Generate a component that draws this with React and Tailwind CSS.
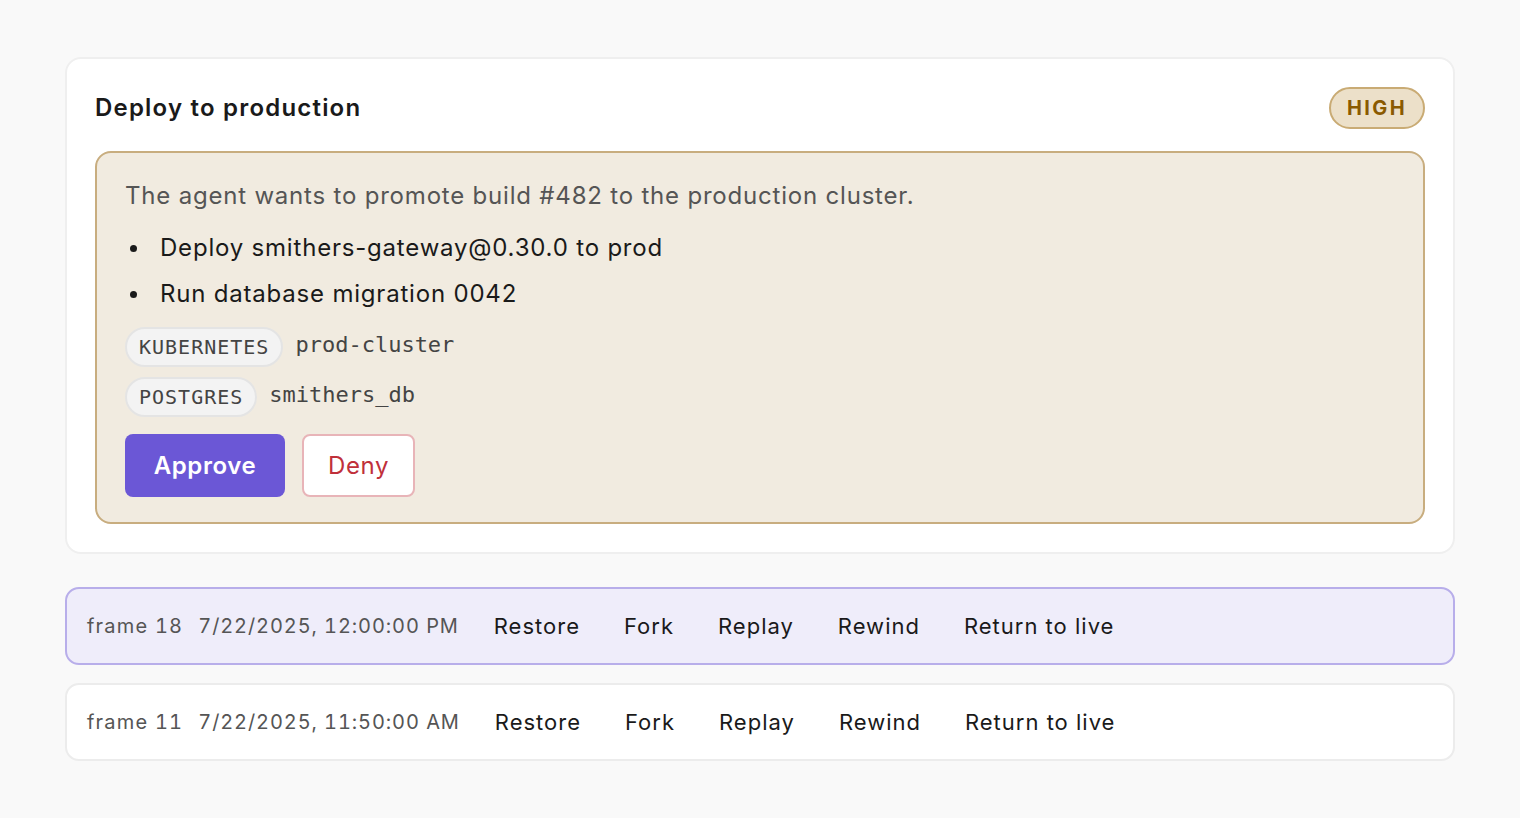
import React from 'react';

const frames = [
    { id: 18, time: '7/22/2025, 12:00:00 PM', active: true },
    { id: 11, time: '7/22/2025, 11:50:00 AM', active: false },
];

const targets = [
    { kind: 'KUBERNETES', name: 'prod-cluster' },
    { kind: 'POSTGRES', name: 'smithers_db' },
];

const steps = ['Deploy smithers-gateway@0.30.0 to prod', 'Run database migration 0042'];

const actions = ['Restore', 'Fork', 'Replay', 'Rewind', 'Return to live'];

const mono = { fontFamily: '"DejaVu Sans Mono", "Liberation Mono", monospace' };

const App = () => {
    return (
        <div className="min-h-screen bg-[#f9f9f9] px-[65px] pt-[57px] font-['Inter',sans-serif]">
            {/* Approval card */}
            <div className="bg-white border-2 border-[#efefef] rounded-[16px] px-[28px] pt-[25px] pb-[28px]">
                <div className="flex items-center justify-between">
                    <h1 className="text-[24px] font-semibold text-[#1a1a1a] leading-[48px] tracking-[1.2px]">
                        Deploy to production
                    </h1>
                    <span className="px-[16px] h-[42px] flex items-center rounded-full bg-[#ece0c9] border-2 border-[#c9ab74] text-[#8a5a00] text-[20px] font-bold tracking-[0.12em]">
                        HIGH
                    </span>
                </div>

                <div className="mt-[19px] bg-[#f1ebe0] border-2 border-[#c8ad7f] rounded-[16px] px-[28px] pt-[25px] pb-[25px]">
                    <p className="text-[24px] text-[#555555] leading-[36px] tracking-[0.8px]">
                        The agent wants to promote build #482 to the production cluster.
                    </p>
                    <ul className="mt-[16px] flex flex-col gap-[10px] text-[24px] text-[#1a1a1a] tracking-[0.8px]">
                        {steps.map((s) => (
                            <li key={s} className="flex items-center leading-[36px]">
                                <span className="ml-[5px] w-[7px] h-[7px] rounded-full bg-[#1a1a1a]" />
                                <span className="ml-[23px]">{s}</span>
                            </li>
                        ))}
                    </ul>

                    <div className="mt-[15px] flex flex-col gap-[10px]">
                        {targets.map((t) => (
                            <div key={t.kind} className="flex items-center gap-[12px]">
                                <span
                                    style={mono}
                                    className="h-[40px] px-[12px] flex items-center rounded-full bg-[#f3f3f3] border-2 border-[#e4e4e4] text-[20px] text-[#444444] tracking-[1px]"
                                >
                                    {t.kind}
                                </span>
                                <span style={mono} className="text-[22px] text-[#444444] -mt-[6px]">
                                    {t.name}
                                </span>
                            </div>
                        ))}
                    </div>

                    <div className="mt-[17px] flex items-center gap-[17px]">
                        <button className="h-[63px] w-[160px] rounded-[8px] bg-[#6b57d6] text-white text-[24px] font-semibold tracking-[0.6px]">
                            Approve
                        </button>
                        <button className="h-[63px] w-[113px] rounded-[8px] bg-white border-2 border-[#e8b4b8] text-[#c0303a] text-[24px] tracking-[0.6px]">
                            Deny
                        </button>
                    </div>
                </div>
            </div>

            {/* Frame history */}
            <div className="mt-[33px] flex flex-col gap-[18px]">
                {frames.map((f) => (
                    <div
                        key={f.id}
                        className={`h-[78px] flex items-center px-[20px] rounded-[14px] border-2 ${f.active
                                ? 'bg-[#efedfa] border-[#b8aeea]'
                                : 'bg-white border-[#ececec]'
                            }`}
                    >
                        <span className="text-[20px] text-[#555555] tracking-[1.2px] tabular-nums">frame {f.id}</span>
                        <span className="ml-[15px] text-[20px] text-[#555555] tracking-[0.9px] tabular-nums">{f.time}</span>
                        <div className="ml-[13px] flex items-center">
                            {actions.map((a) => (
                                <button key={a} className="px-[22px] text-[22px] text-[#1a1a1a] tracking-[1px]">
                                    {a}
                                </button>
                            ))}
                        </div>
                    </div>
                ))}
            </div>
        </div>
    );
};

export default App;
